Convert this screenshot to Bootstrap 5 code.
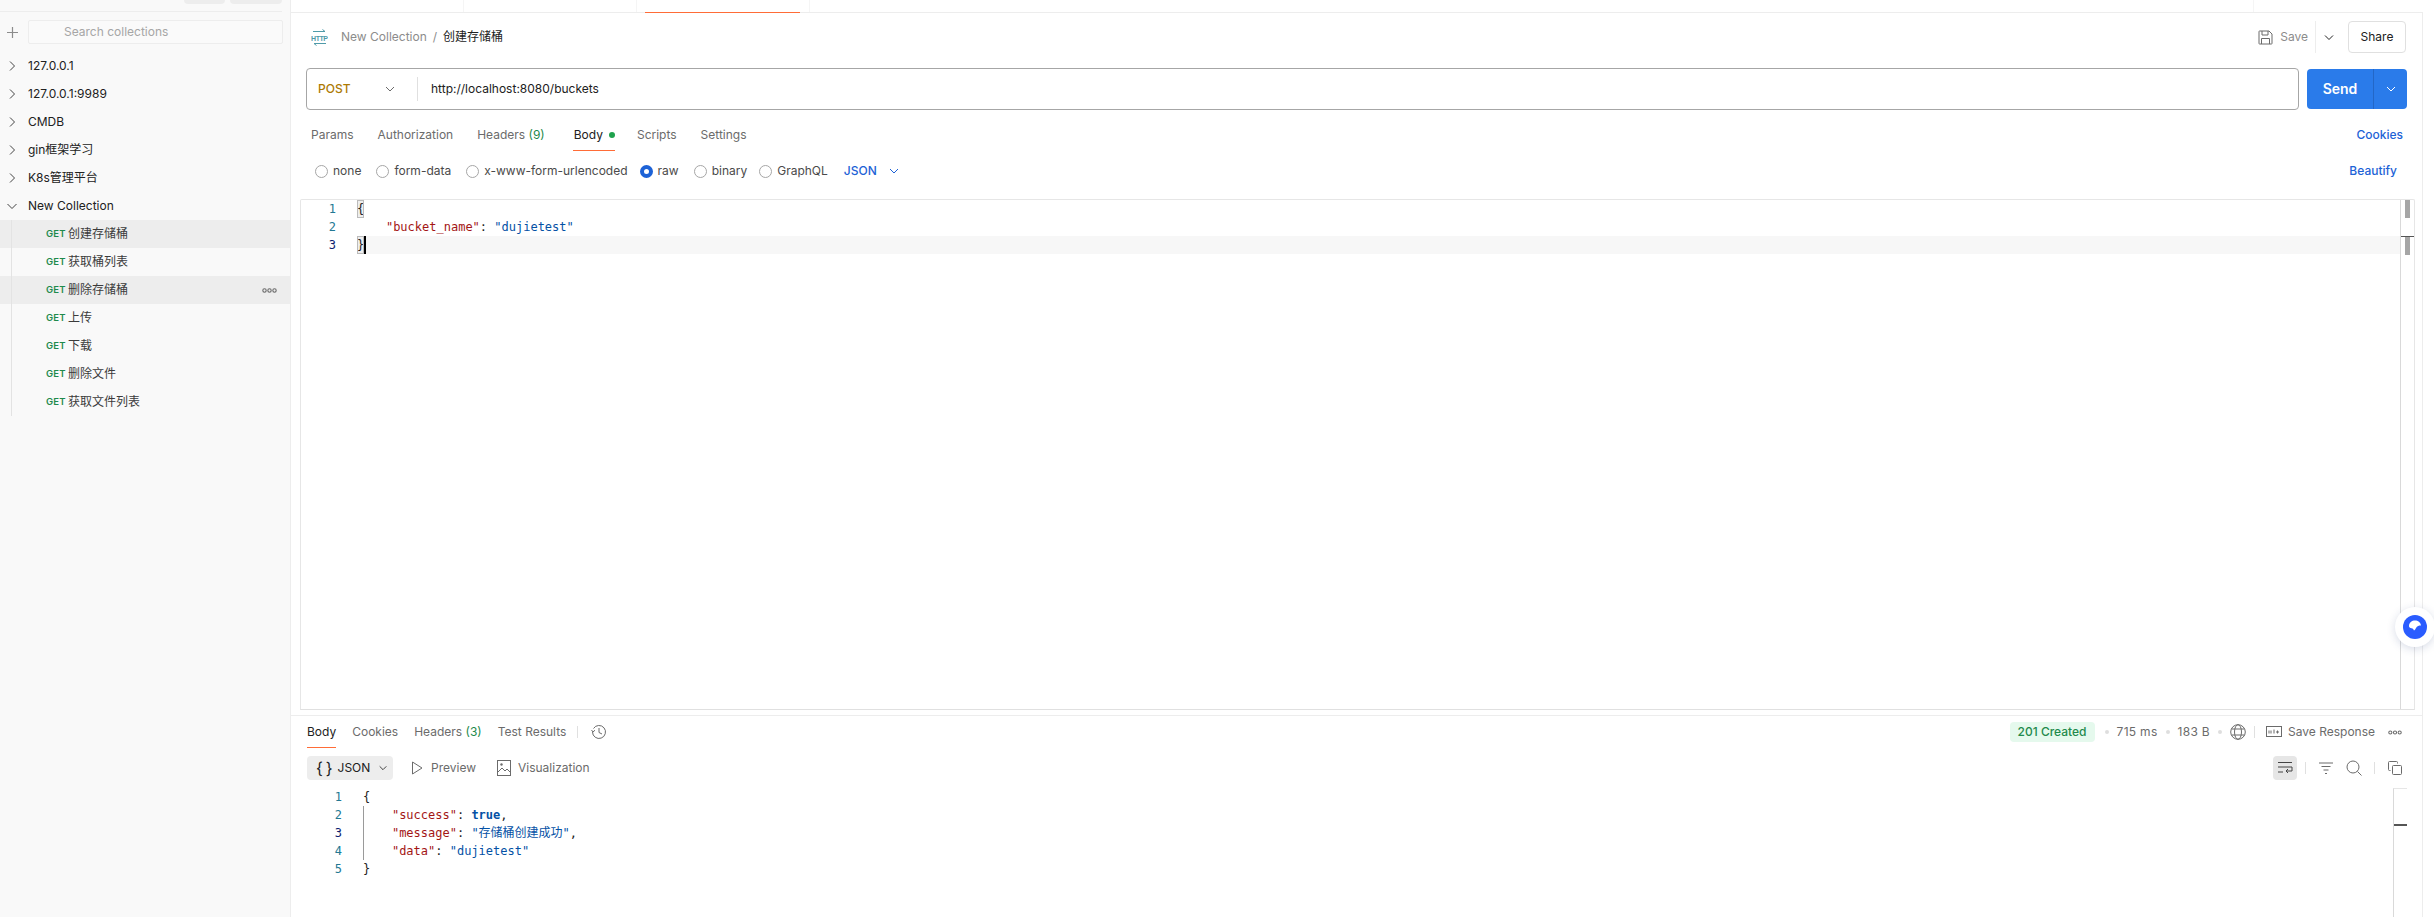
<!DOCTYPE html>
<html lang="en"><head><meta charset="utf-8"><title>Postman</title>
<link href="https://cdn.jsdelivr.net/npm/bootstrap@5.3.0/dist/css/bootstrap.min.css" rel="stylesheet">
<style>
html,body{height:917px;overflow:hidden}
body{font-family:Inter,"Noto Sans CJK SC",sans-serif;font-size:12px;color:#212121;background:#fff;line-height:16px}
svg{display:block;flex:none}
.app{height:917px}
.side{width:291px;flex:none;background:#f9f9f9;border-right:1px solid #ededed}
.side-top{height:12px;margin-right:8px;border-bottom:1px solid #ededed}
.side-btn{height:4px;background:#ededed;border-radius:0 0 4px 4px}
.b1{width:41px;margin-right:5px}.b2{width:52px}
.search-row{height:24px;margin-top:8px;padding-right:7px}
.plus{width:28px;padding-left:6px}
.search-box{border:1px solid #ededed;height:24px;padding-left:35px;color:#a6a6a6;background:#fafafa;border-radius:2px}
.tree{margin-top:8px}
.t-row{height:28px}
.t-chev{width:28px;padding-left:6px}
.req{height:28px;padding-left:46px;padding-right:13px;color:#3b3b3b}
.req.on{background:#ededed}
.m-get{color:#1f8a4c;font-size:9.5px;font-weight:600;width:22px;letter-spacing:.2px}
.reqs{position:relative}
.reqs::before{content:"";position:absolute;left:11px;top:0;bottom:0;width:1px;background:#e3e3e3;z-index:1}
.main{width:2131px;flex:none;min-width:0}
.strip{flex:1;border-left:1px solid #ededed;margin-top:12px}
.tabbar{height:13px;border-bottom:1px solid #ededed;padding-left:172px;padding-right:168px}
.tabbar i{display:block;width:1px;height:12px;background:#f5f5f5}
.t-gap{width:172px}
.accent{width:155px;height:1px;background:#ff6c37;align-self:flex-end;margin:0 9px 0 8px;position:relative;top:1px}
.bread{height:32px;margin-top:8px;padding-left:20px;padding-right:16px}
.crumb-dim{color:#8c8c8c;margin-left:13px}
.slash{color:#8c8c8c;margin:0 6px}
.save-txt{color:#8c8c8c;margin-left:7px}
.vsep{width:1px;height:32px;background:#ededed;margin:0 7px}
.share{border:1px solid #e0e0e0;border-radius:4px;width:58px;height:32px;font-size:12px;color:#212121;margin-left:13px;padding:0;background:#fff}
.url-row{height:42px;margin-top:15px;padding-left:15px;padding-right:15px}
.url-box{flex:1;border:1px solid #a6a6a6;border-radius:4px;height:42px;min-width:0}
.post{color:#ad7a03;font-weight:500;width:77px;padding-left:11px}
.post-chev{margin-right:21px}
.url-sep{width:1px;height:24px;background:#e0e0e0;margin-right:13px}
.send{width:100px;height:40px;margin-left:8px;background:#2a7bea;border-radius:4px;color:#fff;font-size:14px;font-weight:600}
.send-l{width:67px;border-right:1px solid #2367c7;height:100%}
.send-r{flex:1;height:100%}
.req-tabs{height:32px;margin-top:9px;padding-left:20px;padding-right:19px;color:#6b6b6b}
.rt{height:32px;border-bottom:1px solid transparent;margin-right:24px}
.rt.on{color:#212121;border-bottom-color:#ff6c37;padding-right:12px;margin-right:22px;margin-left:4px;padding-left:1px;position:relative}
.dot-g{position:absolute;right:0;top:13px;width:6px;height:6px;background:#1fa24d;border-radius:50%}
.cnt{color:#1f8a4c}
.linkb{color:#1d62d6;font-weight:500}
.body-opts{height:20px;margin-top:10px;padding-left:24px;padding-right:25px;color:#4a4a4a}
.rad{width:13px;height:13px;border:1px solid #a6a6a6;border-radius:50%;margin-right:5px;flex:none;background:#fff}
.rad.on{border:4px solid #1d62d6}
.opt{margin-right:15px}
.opt-tight{margin-right:12px}
.opt-gql{margin-right:16px}
.json-chev{margin-left:11px}
.editor{height:511px;margin-top:18px;margin-left:9px;margin-right:7px;border:1px solid #e6e6e6;border-radius:2px 2px 0 0;border-bottom:1px solid #e0e0e0;font-family:"DejaVu Sans Mono","Noto Sans CJK SC",monospace;font-size:12px;line-height:18px}
.nums{color:#237893;text-align:right;flex:none;width:35px}
.nums .act{color:#0b216f}
.ln{height:18px;white-space:pre}
.ln.act{background:#f7f7f7}
.k{color:#a31515}.s{color:#0451a5}.tr{color:#0451a5;font-weight:700}
.match{background:#eee;outline:1px solid #bbb;outline-offset:-1px;display:inline-block;width:7px;height:18px;vertical-align:top}
.caret{display:inline-block;width:2px;height:18px;background:#000;vertical-align:top}
.code{flex:1;min-width:0;margin-left:21px}
.mini{width:14px;flex:none;border-left:1px solid #d9d9d9}
.mini-bar{width:5px;height:18px;background:#a6a6a6;margin-left:4px}
.mini-space{height:18px}
.mini-mark{height:1px;background:#555}
.split{height:1px;background:#ededed;margin-top:5px}
.res-tabs{height:32px;padding-left:16px;padding-right:20px;color:#6b6b6b}
.res-tab{height:32px;margin-right:16px}
.res-tab.on{color:#212121;border-bottom:1px solid #ff6c37;padding:0}
.res-tab.last{margin-right:11px}
.hist-sep{margin-right:13px}
.mini-sep{width:1px;height:12px;background:#e0e0e0}
.badge-ok{background:#e5f9ed;color:#1f8a4c;border-radius:4px;height:20px;width:85px;font-weight:500;margin-right:2px}
.bul{width:4px;height:4px;border-radius:50%;background:#dedede;margin:0 8px}
.grey{color:#6b6b6b}
.wide{letter-spacing:.3px}
.globe-sep{margin:0 11px 0 8px}
.save-res{margin-left:6px;margin-right:13px}
.res-tools{height:24px;margin-top:8px;padding-left:16px;padding-right:20px}
.json-btn{width:86px;height:24px;background:#ededed;border-radius:4px;padding-left:9px}
.braces{font-size:16px;margin-right:5px}
.play-ic{margin-left:18px}
.viz-ic{margin-left:21px}
.viz-txt{margin-left:7px}
.tool-on{width:24px;height:24px;background:#e6e6e6;border-radius:4px}
.sep-a{margin:0 13px 0 8px}
.sep-b{margin:0 13px 0 12px}
.search-ic{margin-left:13px}
.res-code{margin-top:8px;font-family:"DejaVu Sans Mono","Noto Sans CJK SC",monospace;line-height:18px;height:129px;padding-left:16px;padding-right:15px}
.res-main{position:relative}
.indent{position:absolute;left:0;top:18px;height:54px;width:1px;background:#9a9a9a}
.res-mini{width:14px;flex:none;border-left:1px solid #d9d9d9;border-top:1px solid #e6e6e6}
.res-mark{height:2px;background:#555;margin-top:35px}
.float-btn{position:absolute;left:2395px;top:607px;width:40px;height:40px;border-radius:50%;background:#fff;box-shadow:0 2px 8px rgba(40,60,120,.18);z-index:5}
</style></head>
<body>
<div class="app d-flex">
  <aside class="side d-flex flex-column">
    <div class="side-top d-flex justify-content-end">
      <div class="side-btn b1"></div><div class="side-btn b2"></div>
    </div>
    <div class="search-row d-flex align-items-center">
      <div class="plus d-flex"><svg width="13" height="13" viewBox="0 0 13 13"><path d="M6.500 1v11M1 6.500h11" stroke="#8c8c8c" stroke-width="1.200"/></svg></div>
      <div class="search-box flex-grow-1 d-flex align-items-center">Search collections</div>
    </div>
    <div class="tree">
      <div class="t-row d-flex align-items-center"><div class="t-chev d-flex"><svg width="12" height="12" viewBox="0 0 12 12"><path d="M4 1.500 8.500 6 4 10.500" fill="none" stroke="#444"/></svg></div><span>127.0.0.1</span></div>
      <div class="t-row d-flex align-items-center"><div class="t-chev d-flex"><svg width="12" height="12" viewBox="0 0 12 12"><path d="M4 1.500 8.500 6 4 10.500" fill="none" stroke="#444"/></svg></div><span>127.0.0.1:9989</span></div>
      <div class="t-row d-flex align-items-center"><div class="t-chev d-flex"><svg width="12" height="12" viewBox="0 0 12 12"><path d="M4 1.500 8.500 6 4 10.500" fill="none" stroke="#444"/></svg></div><span>CMDB</span></div>
      <div class="t-row d-flex align-items-center"><div class="t-chev d-flex"><svg width="12" height="12" viewBox="0 0 12 12"><path d="M4 1.500 8.500 6 4 10.500" fill="none" stroke="#444"/></svg></div><span>gin框架学习</span></div>
      <div class="t-row d-flex align-items-center"><div class="t-chev d-flex"><svg width="12" height="12" viewBox="0 0 12 12"><path d="M4 1.500 8.500 6 4 10.500" fill="none" stroke="#444"/></svg></div><span>K8s管理平台</span></div>
      <div class="t-row d-flex align-items-center"><div class="t-chev d-flex"><svg width="12" height="12" viewBox="0 0 12 12"><path d="M1.500 4 6 8.500 10.500 4" fill="none" stroke="#444"/></svg></div><span>New Collection</span></div>
      <div class="reqs">
        <div class="req on d-flex align-items-center"><span class="m-get">GET</span><span>创建存储桶</span></div>
        <div class="req d-flex align-items-center"><span class="m-get">GET</span><span>获取桶列表</span></div>
        <div class="req on d-flex align-items-center"><span class="m-get">GET</span><span>删除存储桶</span><svg class="ms-auto" width="15" height="5" viewBox="0 0 15 5"><g fill="none" stroke="#6b6b6b" stroke-width="1.100"><circle cx="2.500" cy="2.500" r="1.700"/><circle cx="7.500" cy="2.500" r="1.700"/><circle cx="12.500" cy="2.500" r="1.700"/></g></svg></div>
        <div class="req d-flex align-items-center"><span class="m-get">GET</span><span>上传</span></div>
        <div class="req d-flex align-items-center"><span class="m-get">GET</span><span>下载</span></div>
        <div class="req d-flex align-items-center"><span class="m-get">GET</span><span>删除文件</span></div>
        <div class="req d-flex align-items-center"><span class="m-get">GET</span><span>获取文件列表</span></div>
      </div>
    </div>
  </aside>
  <main class="main d-flex flex-column">
    <div class="tabbar d-flex"><i></i><span class="t-gap"></span><i></i><span class="accent"></span><i></i><i class="ms-auto"></i></div>
    <div class="bread d-flex align-items-center">
      <svg width="17" height="17" viewBox="0 0 17 17"><path d="M2 2.500h12M11.500 .5 14 2.500M15 14.500H3M5.500 16.500 3 14.500" fill="none" stroke="#4f9aa8"/><text x="0" y="11.500" font-family="Liberation Sans" font-size="7" font-weight="700" fill="#4f9aa8" textLength="17">HTTP</text></svg>
      <span class="crumb-dim">New Collection</span><span class="slash">/</span><span>创建存储桶</span>
      <svg class="ms-auto" width="15" height="15" viewBox="0 0 15 15"><path d="M1.500 1h9.500l3 3v9.500a.5.5 0 0 1-.5.5h-12a.5.5 0 0 1-.5-.5v-12a.5.5 0 0 1 .5-.5zM4 1v4h6V1M3.500 14V8.500h8V14" fill="none" stroke="#6b6b6b"/></svg>
      <span class="save-txt">Save</span><span class="vsep"></span>
      <svg width="12" height="12" viewBox="0 0 12 12"><path d="M2 4.500 6 8.500l4-4" fill="none" stroke="#212121"/></svg>
      <button class="btn share">Share</button>
    </div>
    <div class="url-row d-flex">
      <div class="url-box d-flex align-items-center">
        <span class="post">POST</span>
        <svg class="post-chev" width="12" height="12" viewBox="0 0 12 12"><path d="M2 4 6 8l4-4" fill="none" stroke="#6b6b6b"/></svg>
        <span class="url-sep"></span><span>http://localhost:8080/buckets</span>
      </div>
      <div class="send d-flex align-self-center">
        <div class="send-l d-flex align-items-center justify-content-center">Send</div>
        <div class="send-r d-flex align-items-center justify-content-center"><svg width="12" height="12" viewBox="0 0 12 12"><path d="M2 4 6 8l4-4" fill="none" stroke="#fff"/></svg></div>
      </div>
    </div>
    <div class="req-tabs d-flex align-items-center">
      <span class="rt d-flex align-items-center">Params</span>
      <span class="rt d-flex align-items-center">Authorization</span>
      <span class="rt d-flex align-items-center">Headers&nbsp;<span class="cnt">(9)</span></span>
      <span class="rt on d-flex align-items-center">Body<span class="dot-g"></span></span>
      <span class="rt d-flex align-items-center">Scripts</span>
      <span class="rt d-flex align-items-center">Settings</span>
      <span class="ms-auto linkb">Cookies</span>
    </div>
    <div class="body-opts d-flex align-items-center">
      <span class="opt d-flex align-items-center"><span class="rad"></span>none</span>
      <span class="opt d-flex align-items-center"><span class="rad"></span>form-data</span>
      <span class="opt opt-tight d-flex align-items-center"><span class="rad"></span>x-www-form-urlencoded</span>
      <span class="opt d-flex align-items-center"><span class="rad on"></span>raw</span>
      <span class="opt opt-tight d-flex align-items-center"><span class="rad"></span>binary</span>
      <span class="opt opt-gql d-flex align-items-center"><span class="rad"></span>GraphQL</span>
      <span class="linkb d-flex align-items-center">JSON<svg class="json-chev" width="12" height="12" viewBox="0 0 12 12"><path d="M2 4 6 8l4-4" fill="none" stroke="#1d62d6"/></svg></span>
      <span class="ms-auto linkb">Beautify</span>
    </div>
    <div class="editor d-flex">
      <div class="nums"><div>1</div><div>2</div><div class="act">3</div></div>
      <div class="code">
        <div class="ln"><span class="match">{</span></div>
        <div class="ln">    <span class="k">"bucket_name"</span>: <span class="s">"dujietest"</span></div>
        <div class="ln act"><span class="match">}</span><span class="caret"></span></div>
      </div>
      <div class="mini"><div class="mini-bar"></div><div class="mini-space"></div><div class="mini-mark"></div><div class="mini-bar"></div></div>
    </div>
    <div class="split"></div>
    <div class="res-tabs d-flex align-items-center">
      <span class="res-tab on d-flex align-items-center">Body</span>
      <span class="res-tab d-flex align-items-center">Cookies</span>
      <span class="res-tab d-flex align-items-center">Headers&nbsp;<span class="cnt">(3)</span></span>
      <span class="res-tab last d-flex align-items-center">Test Results</span>
      <span class="mini-sep hist-sep"></span>
      <svg width="16" height="16" viewBox="0 0 16 16"><path d="M2.500 4.500A6.500 6.500 0 1 1 1.500 8M.5 6l1.500 2L4 6.200M8 4v4.500l3 1.500" fill="none" stroke="#6b6b6b"/></svg>
      <span class="badge-ok ms-auto d-flex align-items-center justify-content-center">201 Created</span>
      <span class="bul"></span><span class="grey wide">715 ms</span>
      <span class="bul"></span><span class="grey wide">183 B</span>
      <span class="bul"></span>
      <svg width="16" height="16" viewBox="0 0 16 16"><g fill="none" stroke="#6b6b6b"><circle cx="8" cy="8" r="7.300"/><ellipse cx="8" cy="8" rx="3.500" ry="7.300"/><path d="M1.500 5h13M1.500 11h13"/></g></svg>
      <span class="mini-sep globe-sep"></span>
      <svg width="16" height="12" viewBox="0 0 16 12"><rect x=".5" y=".5" width="15" height="10" fill="none" stroke="#6b6b6b"/><path d="M3 4.500v3M5 4.500v3M8 3.500v4M10 6h3M11.500 4.500v3" stroke="#6b6b6b" fill="none"/></svg>
      <span class="grey save-res">Save Response</span>
      <svg width="14" height="5" viewBox="0 0 15 5"><g fill="none" stroke="#6b6b6b" stroke-width="1.100"><circle cx="2.500" cy="2.500" r="1.700"/><circle cx="7.500" cy="2.500" r="1.700"/><circle cx="12.500" cy="2.500" r="1.700"/></g></svg>
    </div>
    <div class="res-tools d-flex align-items-center">
      <div class="json-btn d-flex align-items-center">
        <span class="braces">{&#8201;}</span><span>JSON</span>
        <svg class="ms-2" width="10" height="10" viewBox="0 0 12 12"><path d="M2 4 6 8l4-4" fill="none" stroke="#212121"/></svg>
      </div>
      <svg class="play-ic" width="12" height="14" viewBox="0 0 12 14"><path d="M1.500 1v12l9.500-6z" fill="none" stroke="#6b6b6b"/></svg>
      <span class="grey ms-2">Preview</span>
      <svg class="viz-ic" width="14" height="16" viewBox="0 0 14 16"><rect x=".5" y=".5" width="13" height="15" fill="none" stroke="#6b6b6b"/><path d="M1 12l4-4 3 3 2-2 3 3" fill="none" stroke="#6b6b6b"/><circle cx="4.500" cy="4.500" r="1.200" fill="#6b6b6b"/></svg>
      <span class="grey viz-txt">Visualization</span>
      <div class="tool-on ms-auto d-flex align-items-center justify-content-center"><svg width="16" height="14" viewBox="0 0 16 14"><path d="M1 1.500h14M1 6h14M1 11h5M15 6v4H9M11 8l-2 2 2 2" fill="none" stroke="#444"/></svg></div>
      <span class="mini-sep sep-a"></span>
      <svg width="14" height="12" viewBox="0 0 14 12"><path d="M0 1h14M2.500 4.500h9M4.500 8h5M6 11.500h2" stroke="#6b6b6b" fill="none"/></svg>
      <svg class="search-ic" width="16" height="16" viewBox="0 0 16 16"><circle cx="7" cy="7" r="6" fill="none" stroke="#6b6b6b"/><path d="M11.500 11.500 15.500 15.500" stroke="#6b6b6b"/></svg>
      <span class="mini-sep sep-b"></span>
      <svg width="14" height="14" viewBox="0 0 14 14"><rect x="4.500" y="4.500" width="9" height="9" rx="1" fill="none" stroke="#6b6b6b"/><path d="M2.500 9.500H1.500a1 1 0 0 1-1-1v-7a1 1 0 0 1 1-1h7a1 1 0 0 1 1 1v1" fill="none" stroke="#6b6b6b"/></svg>
    </div>
    <div class="res-code d-flex">
      <div class="nums"><div>1</div><div>2</div><div class="act">3</div><div>4</div><div>5</div></div>
      <div class="code res-main">
        <div class="indent"></div>
        <div class="ln">{</div>
        <div class="ln">    <span class="k">"success"</span>: <span class="tr">true</span>,</div>
        <div class="ln">    <span class="k">"message"</span>: <span class="s">"存储桶创建成功"</span>,</div>
        <div class="ln">    <span class="k">"data"</span>: <span class="s">"dujietest"</span></div>
        <div class="ln">}</div>
      </div>
      <div class="res-mini"><div class="res-mark"></div></div>
    </div>
  </main>
  <div class="strip"></div>
</div>
<div class="float-btn d-flex align-items-center justify-content-center"><svg width="24" height="24" viewBox="0 0 24 24"><circle cx="12" cy="12" r="12" fill="#2a5cff"/><path d="M6 11c0-3.500 3-5.500 6-5.500s5.500 1.500 6 5c-2 0-4 .5-5 2.500-.5 1-1 2-2 2.500-.5-1-1-2-2.500-2.200C7 13 6 12.500 6 11z" fill="#fff"/></svg></div>
<script src="https://cdn.jsdelivr.net/npm/bootstrap@5.3.0/dist/js/bootstrap.bundle.min.js"></script>
</body></html>
